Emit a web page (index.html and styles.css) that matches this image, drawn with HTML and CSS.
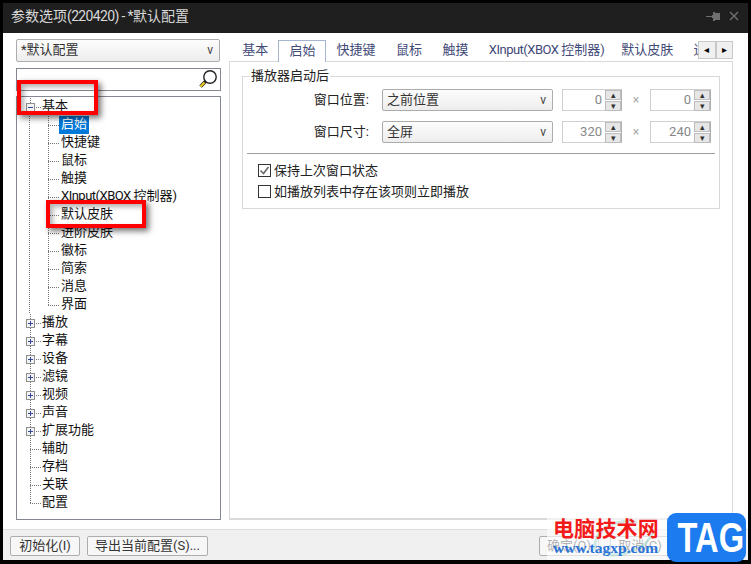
FILE: index.html
```html
<!DOCTYPE html>
<html lang="zh-CN">
<head>
<meta charset="utf-8">
<title>参数选项</title>
<link rel="stylesheet" href="styles.css">
</head>
<body>
<div class="window">
  <header class="titlebar">
    <span class="title">参数选项<span class="tight-more">(220420) - *</span>默认配置</span>
    <span class="title-icons">
      <svg width="14" height="12" viewBox="0 0 14 12"><path d="M0 6h6M6 5h1v2H6zM7 2h1v8H7zM8 3h5v6H8z" fill="#6f6f6f" stroke="#6f6f6f" stroke-width="1" shape-rendering="crispEdges"/></svg>
      <svg width="10" height="10" viewBox="0 0 10 10"><path d="M1 1l8 8M9 1l-8 8" stroke="#6f6f6f" stroke-width="1.4" fill="none"/></svg>
    </span>
  </header>
  <div class="main">
    <aside class="left">
      <div class="combo profile"><span>*默认配置</span><span class="arrow">v</span></div>
      <div class="search">
        <svg width="20" height="21" viewBox="0 0 20 21"><circle cx="12" cy="8" r="6.2" fill="#fff" stroke="#222" stroke-width="1.4"/><path d="M7.5 12.5L2.5 17.5" stroke="#222" stroke-width="3.4"/><path d="M6.5 13.5L2.5 17.5" stroke="#f2d21e" stroke-width="2"/></svg>
      </div>
      <div class="tree">
        <div class="row"><span class="twig root-twig"><span class="box minus"></span></span><span class="label">基本</span></div>
        <div class="row"><span class="guide"></span><span class="twig"></span><span class="label selected">启始</span></div>
        <div class="row"><span class="guide"></span><span class="twig"></span><span class="label">快捷键</span></div>
        <div class="row"><span class="guide"></span><span class="twig"></span><span class="label">鼠标</span></div>
        <div class="row"><span class="guide"></span><span class="twig"></span><span class="label">触摸</span></div>
        <div class="row"><span class="guide"></span><span class="twig"></span><span class="label"><span class="tight">XInput(XBOX </span>控制器)</span></div>
        <div class="row"><span class="guide"></span><span class="twig"></span><span class="label">默认皮肤</span></div>
        <div class="row"><span class="guide"></span><span class="twig"></span><span class="label">进阶皮肤</span></div>
        <div class="row"><span class="guide"></span><span class="twig"></span><span class="label">徽标</span></div>
        <div class="row"><span class="guide"></span><span class="twig"></span><span class="label">简索</span></div>
        <div class="row"><span class="guide"></span><span class="twig"></span><span class="label">消息</span></div>
        <div class="row"><span class="guide"></span><span class="twig end"></span><span class="label">界面</span></div>
        <div class="row"><span class="twig root-twig"><span class="box plus"></span></span><span class="label">播放</span></div>
        <div class="row"><span class="twig root-twig"><span class="box plus"></span></span><span class="label">字幕</span></div>
        <div class="row"><span class="twig root-twig"><span class="box plus"></span></span><span class="label">设备</span></div>
        <div class="row"><span class="twig root-twig"><span class="box plus"></span></span><span class="label">滤镜</span></div>
        <div class="row"><span class="twig root-twig"><span class="box plus"></span></span><span class="label">视频</span></div>
        <div class="row"><span class="twig root-twig"><span class="box plus"></span></span><span class="label">声音</span></div>
        <div class="row"><span class="twig root-twig"><span class="box plus"></span></span><span class="label">扩展功能</span></div>
        <div class="row"><span class="twig root-twig"></span><span class="label">辅助</span></div>
        <div class="row"><span class="twig root-twig"></span><span class="label">存档</span></div>
        <div class="row"><span class="twig root-twig"></span><span class="label">关联</span></div>
        <div class="row"><span class="twig root-twig end"></span><span class="label">配置</span></div>
      </div>
    </aside>
    <section class="right">
      <nav class="tabs">
        <div class="tab-strip">
          <span class="tab">基本</span>
          <span class="tab active">启始</span>
          <span class="tab">快捷键</span>
          <span class="tab">鼠标</span>
          <span class="tab">触摸</span>
          <span class="tab tab-xinput"><span class="tight">XInput(XBOX </span>控制器)</span>
          <span class="tab">默认皮肤</span>
          <span class="tab">进阶皮肤</span>
        </div>
        <span class="tab-scroll"><span class="scroll-btn">◂</span><span class="scroll-btn">▸</span></span>
      </nav>
      <div class="panel">
        <fieldset class="group">
          <legend>播放器启动后</legend>
          <div class="form-row">
            <span class="form-label">窗口位置:</span>
            <div class="combo wide"><span>之前位置</span><span class="arrow">v</span></div>
            <div class="spin"><span class="spin-value">0</span><span class="spin-btns"><span>▴</span><span>▾</span></span></div>
            <span class="times">×</span>
            <div class="spin"><span class="spin-value">0</span><span class="spin-btns"><span>▴</span><span>▾</span></span></div>
          </div>
          <div class="form-row">
            <span class="form-label">窗口尺寸:</span>
            <div class="combo wide"><span>全屏</span><span class="arrow">v</span></div>
            <div class="spin"><span class="spin-value">320</span><span class="spin-btns"><span>▴</span><span>▾</span></span></div>
            <span class="times">×</span>
            <div class="spin"><span class="spin-value">240</span><span class="spin-btns"><span>▴</span><span>▾</span></span></div>
          </div>
          <div class="sep"></div>
          <label class="check"><span class="checkbox"><svg width="11" height="11" viewBox="0 0 11 11"><path d="M1.5 5.5l3 3 5-6.5" fill="none" stroke="#6a6a6a" stroke-width="1.6"/></svg></span>保持上次窗口状态</label>
          <label class="check"><span class="checkbox"></span>如播放列表中存在该项则立即播放</label>
        </fieldset>
      </div>
    </section>
  </div>
  <footer class="bottom">
    <span class="btn init">初始化(I)</span>
    <span class="btn export">导出当前配置(S)...</span>
    <span class="spacer"></span>
    <span class="btn act">确定(O)</span>
    <span class="btn act">取消(C)</span>
    <span class="btn act">应用(A)</span>
  </footer>
</div>

<div class="mark mark-a"></div>
<div class="mark mark-b"></div>

<div class="watermark">
  <div class="wm-text">
    <svg class="wm-swirl" width="70" height="44" viewBox="0 0 70 44"><path d="M4 36C2 16 24 4 46 8M12 40C34 44 56 34 62 18" fill="none" stroke="#a8d8d0" stroke-width="3" opacity=".55"/></svg>
    <span class="wm-cn">电脑技术网</span>
    <span class="wm-url">www.tagxp.com</span>
  </div>
  <div class="wm-tag"><span class="wm-tag-text">TAG</span></div>
</div>
</body>
</html>
```
FILE: styles.css
```css
* { box-sizing: border-box; }
html, body { margin: 0; height: 564px; overflow: hidden; background: #000; }
body {
  position: relative;
  padding: 3px 3px 4px;
  font: 13px/18px Roboto, "Noto Sans CJK SC", "Liberation Sans", sans-serif;
  color: #111;
}
.window { height: 557px; display: flex; flex-direction: column; background: #fff; }
.tight { letter-spacing: -.5px; }
.tight-more { letter-spacing: -.65px; }

.titlebar {
  height: 30px; flex: none; background: #1f1f1f; color: #d8d8d8;
  display: flex; align-items: center; justify-content: space-between;
  padding: 0 9px 4px 8px; font-size: 14px;
}
.title-icons { display: flex; gap: 9px; align-items: center; }

.main { flex: 1; display: flex; gap: 8px; padding: 6px 15px 9px 13px; min-height: 0; }
.left { width: 205px; flex: none; display: flex; flex-direction: column; }
.right { flex: 1; display: flex; flex-direction: column; min-width: 0; }

.combo {
  display: flex; align-items: center; justify-content: space-between;
  height: 23px; padding: 0 6px 1px 4px; border: 1px solid #acacac; border-radius: 2px;
  background: linear-gradient(#fdfdfd, #ededed); color: #333;
}
.profile { margin-right: 1px; }
.arrow { font-size: 12px; color: #444; }

.search {
  height: 23px; margin-top: 6px; border: 1px solid #828790; background: #fff;
  display: flex; justify-content: flex-end; align-items: center; padding-right: 2px;
}
.tree {
  flex: 1; margin-top: 5px; border: 1px solid #828790; padding-top: 1px; background: #fff;
  overflow: hidden;
}
.row { display: flex; height: 18px; align-items: stretch; }
.label { padding: 0 2px 2px; line-height: 16px; margin-left: -1px; white-space: nowrap; color: #111; }
.selected { background: #0078d7; color: #fff; }
.guide {
  width: 31px; flex: none;
  background: repeating-linear-gradient(#777 0 1px, transparent 1px 2px) 12px 0 / 1px 100% no-repeat;
}
.twig {
  width: 12px; flex: none;
  background:
    repeating-linear-gradient(#777 0 1px, transparent 1px 2px) 0 0 / 1px 100% no-repeat,
    repeating-linear-gradient(90deg, #777 0 1px, transparent 1px 2px) 0 9px / 100% 1px no-repeat;
}
.twig.end {
  background:
    repeating-linear-gradient(#777 0 1px, transparent 1px 2px) 0 0 / 1px 10px no-repeat,
    repeating-linear-gradient(90deg, #777 0 1px, transparent 1px 2px) 0 9px / 100% 1px no-repeat;
}
.root-twig {
  width: 24px; padding: 5px 0 0 9px;
  background:
    repeating-linear-gradient(#777 0 1px, transparent 1px 2px) 13px 0 / 1px 100% no-repeat,
    repeating-linear-gradient(90deg, #777 0 1px, transparent 1px 2px) 13px 9px / 11px 1px no-repeat;
}
.root-twig.end {
  background:
    repeating-linear-gradient(#777 0 1px, transparent 1px 2px) 13px 0 / 1px 10px no-repeat,
    repeating-linear-gradient(90deg, #777 0 1px, transparent 1px 2px) 13px 9px / 11px 1px no-repeat;
}
.box {
  display: block; width: 9px; height: 9px; border: 1px solid #8e8f8f;
  background-color: #f4f4f4;
  background-image: linear-gradient(#33479a, #33479a);
  background-size: 5px 1px; background-position: center; background-repeat: no-repeat;
}
.box.plus {
  background-image: linear-gradient(#33479a, #33479a), linear-gradient(#33479a, #33479a);
  background-size: 5px 1px, 1px 5px;
}

.tabs { height: 23px; margin-bottom: -1px; flex: none; display: flex; position: relative; z-index: 1; }
.tab-strip { flex: 1; display: flex; padding-left: 3px; overflow: hidden; min-width: 0; }
.tab { padding: 1px 10.2px 0; white-space: nowrap; color: #3f4a78; line-height: 19px; flex: none; }
.tab-xinput { margin-right: -4px; }
.tab.active {
  margin-top: 1px; padding: 0 10px; border: 1px solid #a6b5cf; border-bottom: 0; background: #fff; height: 22px;
}
.tab-scroll { display: flex; width: 35px; height: 18px; margin-top: 2px; flex: none; }
.scroll-btn {
  flex: 1; border: 1px solid #c8c8c8; background: #f0f0f0; font-size: 10px; line-height: 15px; text-align: center; color: #000;
}

.panel { flex: 1; border: 1px solid #d9d9d9; border-bottom-width: 2px; padding: 5px 12px 0; background: #fff; }
.group { margin: 0; padding: 4px 4px 6px; border: 1px solid #d9d9d9; min-width: 0; }
.group legend { margin-left: 3px; padding: 0 1px; line-height: 18px; color: #222; }

.form-row { display: flex; align-items: center; height: 22px; margin-bottom: 10px; }
.form-label { width: 125px; text-align: right; flex: none; color: #222; padding-right: 3px; }
.wide { width: 171px; height: 22px; margin-left: 10px; flex: none; }
.spin {
  width: 60px; height: 22px; margin-left: 9px; flex: none; display: flex;
  border: 1px solid #d0d0d0; border-right-color: #b0b0b0; color: #888; background: #fff;
}
.times + .spin { width: 61px; margin-left: 0; }
.spin-value { flex: 1; text-align: right; padding-right: 3px; line-height: 19px; }
.spin-btns { width: 16px; display: flex; flex-direction: column; gap: 1px; background: #fff; }
.spin-btns span {
  flex: 1; background: #e6e6e6; border: 1px solid #bdbdbd; font-size: 9px; line-height: 8px; text-align: center; color: #333;
}
.times { width: 28px; text-align: center; color: #aaa; font-size: 12px; flex: none; }
.sep { height: 1px; background: #a0a0a0; margin: 10px 0 6px; }
.check { display: flex; align-items: center; gap: 3px; height: 21px; padding-left: 11px; color: #222; }
.checkbox {
  width: 13px; height: 13px; border: 1px solid #333; background: #fff; flex: none;
  display: flex; align-items: center; justify-content: center;
}

.bottom {
  flex: none; height: 31px; display: flex; gap: 7px; padding: 6px 7px 5px;
  background: #f0f0f0; border-top: 1px solid #dcdcdc;
}
.btn {
  height: 20px; border: 1px solid #adadad; border-radius: 2px; background: #f7f7f7;
  text-align: center; line-height: 18px; color: #333; white-space: nowrap; flex: none;
}
.init { width: 70px; }
.export { width: 121px; }
.spacer { flex: 1; }
.act { width: 60px; margin-left: 4px; }

.mark {
  position: absolute; border: 4px solid #f00;
  box-shadow: 3px 3px 6px rgba(0,0,0,.55), inset 3px 3px 5px rgba(0,0,0,.3);
}
.mark-a { left: 17px; top: 80px; width: 81px; height: 35px; }
.mark-b { left: 46px; top: 200px; width: 100px; height: 28px; }

.watermark {
  position: absolute; left: 547px; top: 513px; width: 200px; height: 50px; display: flex;
}
.wm-text {
  position: relative; width: 120px; height: 47px; padding: 2px 0 0 6px; background: rgba(255,255,255,.62);
  display: flex; flex-direction: column; white-space: nowrap;
}
.wm-swirl { position: absolute; left: 44px; top: 1px; }
.wm-cn {
  position: relative; font: 700 21px/24px "Noto Sans CJK SC", sans-serif; color: #f31a1a; letter-spacing: .2px;
}
.wm-url {
  position: relative; font: 700 15.5px/17px "Liberation Serif", serif; color: #2b73d8;
}
.wm-tag {
  width: 79px; height: 49px; border-radius: 9px; background: #1d7bf0; color: #fff;
  text-align: center; overflow: hidden;
}
.wm-tag-text {
  display: inline-block; font: 700 43px/49px "Liberation Sans", sans-serif; transform: scaleX(.76);
}
```
